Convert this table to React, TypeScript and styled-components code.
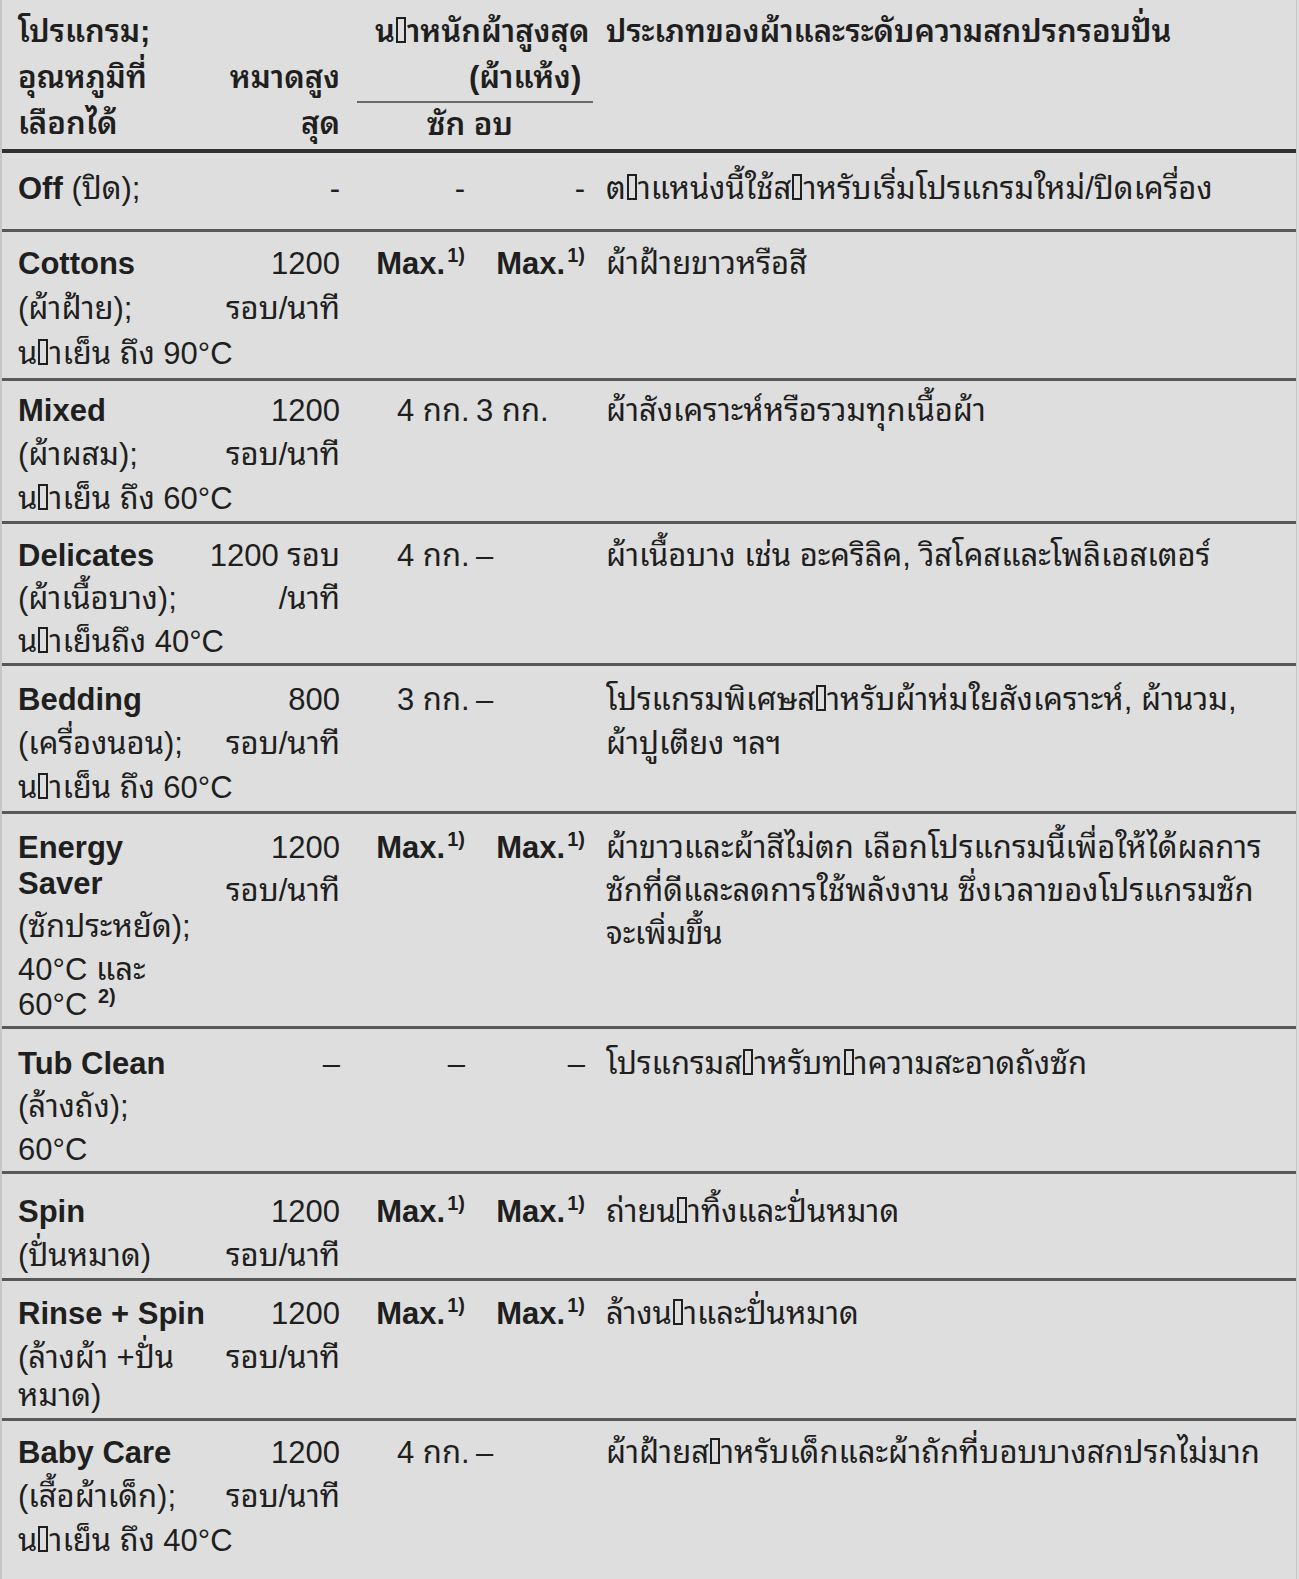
import React from "react";
import styled, { createGlobalStyle } from "styled-components";

const Global = createGlobalStyle`
  html, body { margin: 0; padding: 0; background: #dedede; }
  body {
    font-family: "Liberation Sans", Arial, "Noto Sans Thai Looped", "Noto Serif Thai", "Garuda", "Loma", "Kinnari", "Norasi", "Waree", "Tlwg Typo", "Noto Sans Thai", sans-serif;
    color: #1f1f1f;
    font-size: 31px;
  }
`;

const Table = styled.div`
  width: 1297px;
  background: #dedede;
  border-left: 2px solid #c6c6c6;
  border-right: 1px solid #c6c6c6;
  box-sizing: border-box;
`;

const Row = styled.div<{ $pt?: number; $pb?: number; $head?: boolean }>`
  display: grid;
  grid-template-columns: 194px 128px 135px 118px 1fr;
  align-items: start;
  padding: ${(p) => p.$pt ?? 10}px 0 ${(p) => p.$pb ?? 0}px 16px;
  border-bottom: ${(p) => (p.$head ? "4px solid #303030" : "3px solid #575757")};
`;

const Cell = styled.div<{ $align?: "left" | "right"; $pl?: number; $pr?: number }>`
  display: flex;
  flex-direction: column;
  align-items: ${(p) => (p.$align === "right" ? "flex-end" : "flex-start")};
  padding-left: ${(p) => p.$pl ?? 0}px;
  padding-right: ${(p) => p.$pr ?? 0}px;
  min-width: 0;
`;

const Group = styled.div`
  grid-column: 3 / 5;
  margin-left: 17px;
  display: flex;
  flex-direction: column;
`;

const Line = styled.div<{ $h?: number; $pull?: number; $indent?: number; $bold?: boolean }>`
  flex-shrink: 0;
  height: ${(p) => p.$h ?? 43}px;
  line-height: ${(p) => p.$h ?? 43}px;
  margin-top: ${(p) => -(p.$pull ?? 0)}px;
  padding-left: ${(p) => p.$indent ?? 0}px;
  white-space: nowrap;
  font-weight: ${(p) => (p.$bold ? 600 : 400)};
`;

const Rule = styled.div`
  height: 2px;
  background: #6a6a6a;
`;

const B = styled.b`
  font-weight: 700;
`;

const Sup = styled.sup`
  font-weight: 700;
  font-size: 20px;
  line-height: 0;
  vertical-align: 0;
  position: relative;
  top: -12px;
  margin-left: 2px;
`;

const Tofu = styled.span`
  display: inline-block;
  width: 10px;
  height: 26px;
  border: 2px solid #1f1f1f;
  vertical-align: -1px;
  margin: 0 1px;
  box-sizing: border-box;
`;

const Max = () => (
  <B>
    Max.<Sup>1)</Sup>
  </B>
);

const T = () => <Tofu />;

type RowData = {
  c1: React.ReactNode[];
  c2: React.ReactNode[];
  c3: React.ReactNode[];
  c4: React.ReactNode[];
  c5: React.ReactNode[];
  kg?: boolean;
  pt?: number;
  pb?: number;
  lh?: number;
  pulls?: number[];
};

const rows: RowData[] = [
  {
    c1: [<><B>Off</B> (ปิด);</>],
    c2: ["-"],
    c3: ["-"],
    c4: ["-"],
    c5: [<>ต<T />าแหน่งนี้ใช้ส<T />าหรับเริ่มโปรแกรมใหม่/ปิดเครื่อง</>],
    pt: 14,
    pb: 19,
  },
  {
    c1: [<B>Cottons</B>, "(ผ้าฝ้าย);", <>น<T />าเย็น ถึง 90°C</>],
    c2: ["1200", "รอบ/นาที"],
    c3: [<Max />],
    c4: [<Max />],
    c5: ["ผ้าฝ้ายขาวหรือสี"],
    pt: 9,
    lh: 45,
    pb: 2,
  },
  {
    c1: [<B>Mixed</B>, "(ผ้าผสม);", <>น<T />าเย็น ถึง 60°C</>],
    c2: ["1200", "รอบ/นาที"],
    c3: ["4 กก."],
    c4: ["3 กก."],
    c5: ["ผ้าสังเคราะห์หรือรวมทุกเนื้อผ้า"],
    kg: true,
    pt: 8,
    lh: 44,
  },
  {
    c1: [<B>Delicates</B>, "(ผ้าเนื้อบาง);", <>น<T />าเย็นถึง 40°C</>],
    c2: ["1200 รอบ", "/นาที"],
    c3: ["4 กก."],
    c4: ["–"],
    c5: ["ผ้าเนื้อบาง เช่น อะคริลิค, วิสโคสและโพลิเอสเตอร์"],
    kg: true,
    pt: 10,
  },
  {
    c1: [<B>Bedding</B>, "(เครื่องนอน);", <>น<T />าเย็น ถึง 60°C</>],
    c2: ["800", "รอบ/นาที"],
    c3: ["3 กก."],
    c4: ["–"],
    c5: [<>โปรแกรมพิเศษส<T />าหรับผ้าห่มใยสังเคราะห์, ผ้านวม,</>, "ผ้าปูเตียง ฯลฯ"],
    kg: true,
    pt: 12,
    lh: 44,
    pb: 1,
  },
  {
    c1: [<B>Energy</B>, <B>Saver</B>, "(ซักประหยัด);", "40°C และ", <>60°C <Sup>2)</Sup></>],
    c2: ["1200", "รอบ/นาที"],
    c3: [<Max />],
    c4: [<Max />],
    c5: [
      "ผ้าขาวและผ้าสีไม่ตก เลือกโปรแกรมนี้เพื่อให้ได้ผลการ",
      "ซักที่ดีและลดการใช้พลังงาน ซึ่งเวลาของโปรแกรมซัก",
      "จะเพิ่มขึ้น",
    ],
    pt: 12,
    pulls: [0, 7, 0, 0, 8],
  },
  {
    c1: [<B>Tub Clean</B>, "(ล้างถัง);", "60°C"],
    c2: ["–"],
    c3: ["–"],
    c4: ["–"],
    c5: [<>โปรแกรมส<T />าหรับท<T />าความสะอาดถังซัก</>],
    pt: 13,
  },
  {
    c1: [<B>Spin</B>, "(ปั่นหมาด)"],
    c2: ["1200", "รอบ/นาที"],
    c3: [<Max />],
    c4: [<Max />],
    c5: [<>ถ่ายน<T />าทิ้งและปั่นหมาด</>],
    pt: 16,
    lh: 44,
  },
  {
    c1: [<B>Rinse + Spin</B>, "(ล้างผ้า +ปั่น", "หมาด)"],
    c2: ["1200", "รอบ/นาที"],
    c3: [<Max />],
    c4: [<Max />],
    c5: [<>ล้างน<T />าและปั่นหมาด</>],
    pt: 11,
    lh: 44,
    pulls: [0, 0, 6],
  },
  {
    c1: [<B>Baby Care</B>, "(เสื้อผ้าเด็ก);", <>น<T />าเย็น ถึง 40°C</>],
    c2: ["1200", "รอบ/นาที"],
    c3: ["4 กก."],
    c4: ["–"],
    c5: [<>ผ้าฝ้ายส<T />าหรับเด็กและผ้าถักที่บอบบางสกปรกไม่มาก</>],
    kg: true,
    pt: 10,
    lh: 44,
    pb: 24,
  },
];

const Lines = ({ items, pulls, lh }: { items: React.ReactNode[]; pulls?: number[]; lh?: number }) => (
  <>
    {items.map((it, i) => (
      <Line key={i} $h={lh} $pull={pulls ? pulls[i] : 0}>
        {it}
      </Line>
    ))}
  </>
);

export default function App() {
  return (
    <>
      <Global />
      <Table>
        <Row $head $pt={9} $pb={2}>
          <Cell>
            <Line $h={46} $bold>โปรแกรม;</Line>
            <Line $h={46} $bold>อุณหภูมิที่</Line>
            <Line $h={46} $bold>เลือกได้</Line>
          </Cell>
          <Cell $align="right">
            <Line $h={46}>&nbsp;</Line>
            <Line $h={46} $bold>หมาดสูง</Line>
            <Line $h={46} $bold>สุด</Line>
          </Cell>
          <Group>
            <Line $h={46} $indent={18} $bold>
              น<T />าหนักผ้าสูงสุด
            </Line>
            <Line $h={46} $indent={112} $bold>
              (ผ้าแห้ง)
            </Line>
            <Rule />
            <Line $h={44} $indent={70} $bold>
              ซัก อบ
            </Line>
          </Group>
          <Cell $pl={13}>
            <Line $h={46} $bold>
              ประเภทของผ้าและระดับความสกปรกรอบปั่น
            </Line>
          </Cell>
        </Row>
        {rows.map((r, i) => (
          <Row key={i} $pt={r.pt} $pb={r.pb}>
            <Cell>
              <Lines items={r.c1} pulls={r.pulls} lh={r.lh} />
            </Cell>
            <Cell $align="right">
              <Lines items={r.c2} lh={r.lh} />
            </Cell>
            <Cell $align={r.kg ? "left" : "right"} $pl={r.kg ? 57 : 0} $pr={r.kg ? 0 : 10}>
              <Lines items={r.c3} lh={r.lh} />
            </Cell>
            <Cell $align={r.kg ? "left" : "right"} $pl={r.kg ? 1 : 0} $pr={r.kg ? 0 : 8}>
              <Lines items={r.c4} lh={r.lh} />
            </Cell>
            <Cell $pl={13}>
              <Lines items={r.c5} lh={r.lh} />
            </Cell>
          </Row>
        ))}
      </Table>
    </>
  );
}
